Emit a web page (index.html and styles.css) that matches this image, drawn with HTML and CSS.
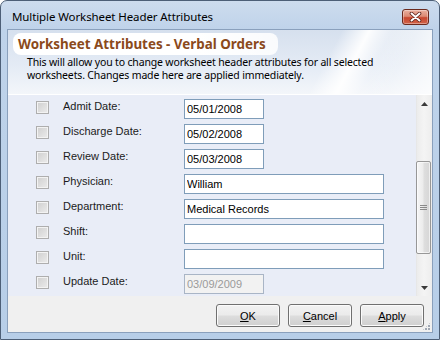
FILE: index.html
```html
<!DOCTYPE html>
<html>
<head>
<meta charset="utf-8">
<title>Multiple Worksheet Header Attributes</title>
<link rel="stylesheet" href="styles.css">
</head>
<body>
<div class="window">
  <div class="titlebar">
    <span class="title">Multiple Worksheet Header Attributes</span>
    <div class="close">
      <svg width="13" height="10" viewBox="0 0 13 10">
        <path d="M2.5 1.5 L10.5 8.5 M10.5 1.5 L2.5 8.5" stroke="#5a2018" stroke-width="3.6" stroke-linecap="round"/>
        <path d="M2.5 1.5 L10.5 8.5 M10.5 1.5 L2.5 8.5" stroke="#ffffff" stroke-width="2" stroke-linecap="round"/>
      </svg>
    </div>
  </div>
  <div class="client">
    <div class="header">
      <div class="pill">Worksheet Attributes - Verbal Orders</div>
      <p class="desc">This will allow you to change worksheet header attributes for all selected<br>worksheets. Changes made here are applied immediately.</p>
    </div>
    <div class="main">
      <div class="form">
        <div class="row"><span class="check"></span><label class="lbl">Admit Date:</label><input class="field date" type="text" value="05/01/2008"></div>
        <div class="row"><span class="check"></span><label class="lbl">Discharge Date:</label><input class="field date" type="text" value="05/02/2008"></div>
        <div class="row"><span class="check"></span><label class="lbl">Review Date:</label><input class="field date" type="text" value="05/03/2008"></div>
        <div class="row"><span class="check"></span><label class="lbl">Physician:</label><input class="field wide" type="text" value="William"></div>
        <div class="row"><span class="check"></span><label class="lbl">Department:</label><input class="field wide" type="text" value="Medical Records"></div>
        <div class="row"><span class="check"></span><label class="lbl">Shift:</label><input class="field wide" type="text" value=""></div>
        <div class="row"><span class="check"></span><label class="lbl">Unit:</label><input class="field wide" type="text" value=""></div>
        <div class="row"><span class="check"></span><label class="lbl">Update Date:</label><input class="field date disabled" type="text" value="03/09/2009" disabled></div>
      </div>
      <div class="scrollbar">
        <div class="sb-btn">
          <svg width="7" height="4" viewBox="0 0 7 4"><polygon points="0,4 3.5,0 7,4" fill="#3a3a3a"/></svg>
        </div>
        <div class="track">
          <div class="thumb">
            <svg width="7" height="5" viewBox="0 0 7 5"><path d="M0 0.5H7M0 2.5H7M0 4.5H7" stroke="#8a8a8a" stroke-width="1"/></svg>
          </div>
        </div>
        <div class="sb-btn">
          <svg width="7" height="4" viewBox="0 0 7 4"><polygon points="0,0 3.5,4 7,0" fill="#3a3a3a"/></svg>
        </div>
      </div>
    </div>
    <div class="buttons">
      <button class="btn" type="button"><u>O</u>K</button>
      <button class="btn" type="button"><u>C</u>ancel</button>
      <button class="btn" type="button"><u>A</u>pply</button>
    </div>
    <div class="grip"></div>
  </div>
</div>
</body>
</html>
```
FILE: styles.css
```css
html, body {
  margin: 0;
  padding: 0;
  background: #ffffff;
}
body {
  width: 440px;
  height: 340px;
  overflow: hidden;
}
.window {
  width: 440px;
  height: 340px;
  box-sizing: border-box;
  border: 1px solid #4d5f77;
  border-radius: 7px 7px 0 0;
  background: linear-gradient(to bottom, #cddcee 0px, #bfd3ea 28px, #b7cee8 100%);
  padding: 0 6px 6px;
  display: flex;
  flex-direction: column;
}
.titlebar {
  height: 28px;
  flex: none;
  display: flex;
  align-items: flex-start;
}
.title {
  font-family: "Noto Sans", "DejaVu Sans", sans-serif;
  font-size: 11.5px;
  letter-spacing: -0.1px;
  color: #000;
  padding: 9px 0 0 5px;
  line-height: 14px;
}
.close {
  margin: 8px 4px 0 auto;
  width: 25px;
  height: 14px;
  border: 1px solid #6b2a1e;
  border-radius: 3px;
  background: linear-gradient(to bottom, #eab09f 0%, #dc8a74 45%, #c8472f 55%, #d0634a 100%);
  box-shadow: inset 0 0 0 1px rgba(255,255,255,0.35);
  display: flex;
  align-items: center;
  justify-content: center;
}
.close svg { display: block; }
.client {
  flex: 1;
  border: 1px solid #8aa0bc;
  background: #f0f0f0;
  display: flex;
  flex-direction: column;
  position: relative;
  overflow: hidden;
}
.header {
  height: 61px;
  padding: 3px 0 0 5px;
  border-bottom: 1px solid #ffffff;
  background:
    linear-gradient(118deg, rgba(255,255,255,0) 0%, rgba(255,255,255,0) 73%, rgba(255,255,255,0.95) 79%, rgba(255,255,255,0.25) 84%, rgba(255,255,255,0) 90%),
    linear-gradient(to right, rgba(255,255,255,0) 85%, rgba(255,255,255,0.7) 100%),
    linear-gradient(to bottom, #d6e0ee 0%, #e4ebf5 55%, #f3f6fa 100%);
}
.pill {
  display: inline-block;
  height: 22px;
  line-height: 22px;
  padding: 0 12px 0 5px;
  border-radius: 8px;
  background: linear-gradient(to right, #ffffff 70%, rgba(255,255,255,0.85) 100%);
  font-family: "Noto Sans", "DejaVu Sans", sans-serif;
  font-weight: bold;
  font-size: 13.4px;
  color: #8b4a1b;
}
.desc {
  margin: 1px 0 0 14px;
  font-family: "Noto Sans", "DejaVu Sans", sans-serif;
  font-size: 10.5px;
  letter-spacing: -0.16px;
  line-height: 13px;
  color: #000;
}
.main {
  height: 201px;
  flex: none;
  display: flex;
}
.form {
  flex: 1;
  background: #e9edf7;
  font-family: "Liberation Sans", Arial, sans-serif;
  font-size: 11px;
}
.row {
  height: 25px;
  display: flex;
  align-items: flex-start;
  padding-left: 28px;
}
.check {
  width: 11px;
  height: 11px;
  margin-top: 6px;
  margin-right: 14px;
  border: 1px solid #aeaeae;
  background: linear-gradient(135deg, #cfcfcf, #ececec);
  box-shadow: inset 0 0 0 1px #f3f3f3;
  flex: none;
}
.lbl {
  width: 121px;
  padding-top: 4px;
  line-height: 14px;
  color: #1b1b1b;
  flex: none;
}
.field {
  margin-top: 4px;
  height: 20px;
  box-sizing: border-box;
  border: 1px solid #7f9db9;
  background: #ffffff;
  padding: 0 2px;
  font-family: "Liberation Sans", Arial, sans-serif;
  font-size: 11px;
  color: #000;
  outline: none;
}
.date { width: 80px; }
.wide { width: 200px; }
.field.disabled {
  background: #f2f2f2;
  color: #9a9a9a;
  border-color: #a9b5c6;
}
.scrollbar {
  width: 16px;
  flex: none;
  display: flex;
  flex-direction: column;
  background: linear-gradient(to right, #e2e2e2 0px, #ececec 1px, #f4f4f4 50%, #ededed 100%);
}
.sb-btn {
  height: 17px;
  display: flex;
  align-items: center;
  justify-content: center;
}
.sb-btn svg { display: block; }
.track {
  flex: 1;
  padding-top: 49px;
}
.thumb {
  height: 91px;
  margin: 0 1px 0 0;
  border: 1px solid #979797;
  border-radius: 2px;
  background: linear-gradient(to right, #f6f6f6 0%, #ececec 45%, #dedede 55%, #d6d6d6 100%);
  box-shadow: inset 0 0 0 1px rgba(255,255,255,0.6);
  display: flex;
  align-items: center;
  justify-content: center;
}
.thumb svg { display: block; }
.buttons {
  flex: 1;
  display: flex;
  justify-content: flex-end;
  align-items: flex-start;
  gap: 8px;
  padding: 8px 8px 0 0;
}
.btn {
  width: 64px;
  height: 23px;
  border: 1px solid #707070;
  border-radius: 3px;
  background: linear-gradient(to bottom, #f2f2f2 0%, #ebebeb 48%, #dddddd 52%, #cfcfcf 100%);
  box-shadow: inset 0 0 0 1px #fbfbfb;
  font-family: "Liberation Sans", Arial, sans-serif;
  font-size: 11px;
  color: #000;
  padding: 0;
}
.btn u { text-decoration: underline; }
.grip {
  position: absolute;
  right: 1px;
  bottom: 1px;
  width: 9px;
  height: 9px;
  background: radial-gradient(circle at 1px 1px, #a0a8b4 0.9px, transparent 1.2px) 0 0 / 3px 3px;
  clip-path: polygon(100% 0, 100% 100%, 0 100%);
}
```
